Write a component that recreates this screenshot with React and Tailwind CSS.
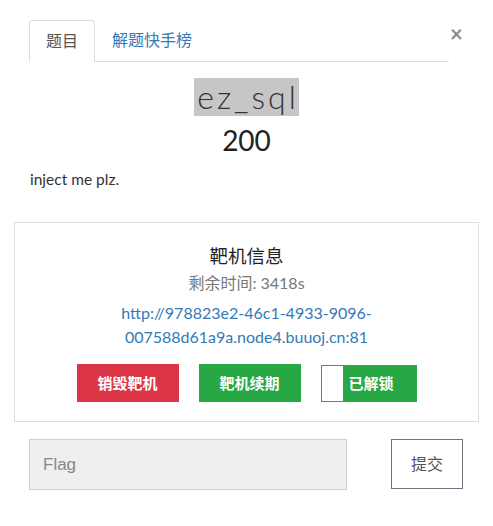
export default function App() {
  return (
    <div className="w-[493px] h-[526px] bg-white overflow-hidden text-[#333] font-['Lato','Noto_Sans_CJK_SC',sans-serif]">
      <div className="flex items-start pt-[20px] pl-[29px]">
        <div className="flex w-[420px] h-[42px] border-b border-[#ddd]">
          <div className="h-[42px] px-[16px] border border-[#ddd] border-b-white rounded-t-[4px] text-[16px] leading-[40px] text-[#555] bg-white">
            题目
          </div>
          <div className="h-[41px] ml-[2px] px-[15px] text-[16px] leading-[40px] text-[#337ab7]">
            解题快手榜
          </div>
        </div>
        <div className="mt-[3px] w-[15px] text-center text-[22px] leading-[22px] font-bold text-[#8a8a8a]">×</div>
      </div>

      <div className="mt-[16px] text-center">
        <span className="bg-[#c6c6c6] text-[32px] leading-[38px] font-light tracking-[3px] text-[#333] inline-block pl-[3px]">ez_sql</span>
      </div>
      <div className="mt-[7px] text-center text-[28px] leading-[34px] text-[#222]">200</div>
      <div className="mt-[12px] ml-[30px] text-[15.5px] leading-[20px] text-[#333]">inject me plz.</div>

      <div className="mt-[33px] ml-[14px] w-[465px] border border-[#ddd] pt-[20px] pb-[19px] text-center">
        <div className="text-[18.5px] leading-[26px] text-[#222]">靶机信息</div>
        <div className="mt-[3px] text-[16px] leading-[22px] text-[#777]">剩余时间: 3418s</div>
        <div className="mt-[7px] text-[16px] leading-[24px] text-[#337ab7]">
          http://978823e2-46c1-4933-9096-
          <br />
          007588d61a9a.node4.buuoj.cn:81
        </div>
        <div className="mt-[15px] flex justify-center items-start gap-[20px]">
          <div className="w-[102px] h-[38px] bg-[#dc3545] text-white font-bold text-[15px] leading-[38px]">销毁靶机</div>
          <div className="w-[102px] h-[38px] bg-[#28a745] text-white font-bold text-[15px] leading-[38px]">靶机续期</div>
          <div className="mt-[1px] w-[96px] h-[37px] border border-[#28a745] bg-[#28a745] flex">
            <div className="w-[21px] h-full bg-white"></div>
            <div className="pl-[6px] text-white font-bold text-[15px] leading-[35px]">已解锁</div>
          </div>
        </div>
      </div>

      <div className="mt-[17px] ml-[29px] flex items-start">
        <div className="w-[318px] h-[51px] bg-[#efefef] border border-[#d0d0d6] pl-[13px] text-[17px] leading-[49px] text-[#888] font-['Liberation_Sans',Arial,sans-serif]">
          Flag
        </div>
        <div className="ml-[44px] w-[72px] h-[50px] border border-[#6c757d] text-center text-[16px] leading-[48px] text-[#555]">
          提交
        </div>
      </div>
    </div>
  );
}
